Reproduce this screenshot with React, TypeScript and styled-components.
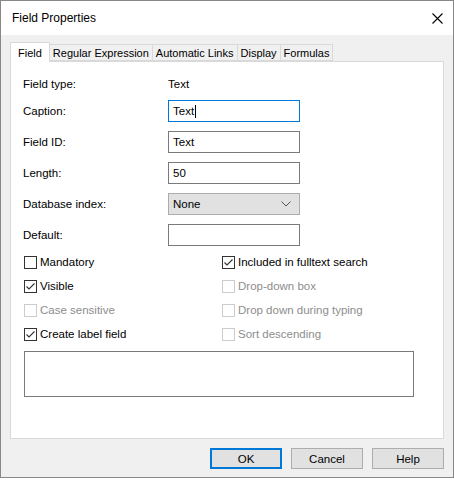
import React from 'react';
import styled, { createGlobalStyle } from 'styled-components';

const Global = createGlobalStyle`
  html, body { margin: 0; padding: 0; background: #ffffff; }
  body { font-family: "Segoe UI", "Liberation Sans", Arial, sans-serif; font-size: 11.5px; color: #000; }
  * { box-sizing: border-box; }
`;

const Window = styled.div`
  width: 454px;
  height: 478px;
  border: 1px solid #888888;
  background: #f0f0f0;
  display: flex;
  flex-direction: column;
`;

const TitleBar = styled.div`
  height: 34px;
  background: #ffffff;
  display: flex;
  align-items: center;
  justify-content: space-between;
  padding: 0 10px 0 11px;
  font-size: 12px;
`;

const Body = styled.div`
  flex: 1;
  display: flex;
  flex-direction: column;
  padding: 6px 9px 0 9px;
`;

const TabRow = styled.div`
  display: flex;
  align-items: flex-end;
  height: 20px;
  padding-left: 1px;
`;

const Tab = styled.div<{ $active?: boolean }>`
  height: ${({ $active }) => ($active ? '20px' : '17px')};
  padding: 0 ${({ $active }) => ($active ? '7px' : '3px')};
  margin-bottom: ${({ $active }) => ($active ? '-1px' : '0')};
  background: ${({ $active }) => ($active ? '#ffffff' : '#f0f0f0')};
  border: 1px solid #d9d9d9;
  border-bottom: ${({ $active }) => ($active ? 'none' : '1px solid #d9d9d9')};
  margin-left: -1px;
  display: flex;
  align-items: center;
  font-size: 11px;
  position: relative;
  z-index: ${({ $active }) => ($active ? 1 : 0)};
`;

const Panel = styled.div`
  height: 378px;
  background: #ffffff;
  border: 1px solid #d9d9d9;
  padding: 14px 12px 0 12px;
`;

const FormRow = styled.div`
  display: grid;
  grid-template-columns: 145px 132px;
  align-items: center;
  height: 22px;
  margin-bottom: 9px;
`;

const Label = styled.span``;

const TextBox = styled.div<{ $focus?: boolean }>`
  height: 22px;
  border: 1px solid ${({ $focus }) => ($focus ? '#0078d7' : '#7a7a7a')};
  background: #fff;
  display: flex;
  align-items: center;
  padding-left: 4px;
`;

const Caret = styled.span`
  display: inline-block;
  width: 1px;
  height: 13px;
  background: #000;
  margin-left: 1px;
`;

const Combo = styled.div`
  height: 22px;
  border: 1px solid #adadad;
  background: #e1e1e1;
  display: flex;
  align-items: center;
  justify-content: space-between;
  padding: 0 8px 0 4px;
`;

const CheckGrid = styled.div`
  display: grid;
  grid-template-columns: 198px 190px;
  row-gap: 8px;
  margin-top: 8px;
  padding-left: 1px;
`;

const CheckItem = styled.div<{ $disabled?: boolean }>`
  display: flex;
  align-items: center;
  gap: 3px;
  height: 16px;
  color: ${({ $disabled }) => ($disabled ? '#8d8d8d' : '#000')};
`;

const Box = styled.span<{ $disabled?: boolean }>`
  width: 13px;
  height: 13px;
  border: 1px solid ${({ $disabled }) => ($disabled ? '#cccccc' : '#333333')};
  background: #fff;
  display: flex;
  align-items: center;
  justify-content: center;
`;

const Memo = styled.div`
  width: 390px;
  height: 46px;
  border: 1px solid #7a7a7a;
  margin-top: 9px;
  margin-left: 1px;
`;

const ButtonRow = styled.div`
  display: flex;
  justify-content: flex-end;
  gap: 9px;
  padding-top: 9px;
`;

const Button = styled.div<{ $default?: boolean }>`
  width: 72px;
  height: 21px;
  background: #e1e1e1;
  border: ${({ $default }) => ($default ? '2px solid #0078d7' : '1px solid #adadad')};
  display: flex;
  align-items: center;
  justify-content: center;
`;

const Check = ({ on, disabled }: { on?: boolean; disabled?: boolean }) => (
  <Box $disabled={disabled}>
    {on && (
      <svg width="11" height="11" viewBox="0 0 11 11">
        <path d="M1.5 5.5 L4 8 L9.5 2.5" fill="none" stroke="#333" strokeWidth="1.1" />
      </svg>
    )}
  </Box>
);

const Item = ({ label, on, disabled }: { label: string; on?: boolean; disabled?: boolean }) => (
  <CheckItem $disabled={disabled}>
    <Check on={on} disabled={disabled} />
    <span>{label}</span>
  </CheckItem>
);

export default function App() {
  return (
    <>
      <Global />
      <Window>
        <TitleBar>
          <span>Field Properties</span>
          <svg width="11" height="11" viewBox="0 0 11 11">
            <path d="M0.5 0.5 L10.5 10.5 M10.5 0.5 L0.5 10.5" stroke="#000" strokeWidth="1.1" />
          </svg>
        </TitleBar>
        <Body>
          <TabRow>
            <Tab $active>Field</Tab>
            <Tab>Regular Expression</Tab>
            <Tab>Automatic Links</Tab>
            <Tab>Display</Tab>
            <Tab>Formulas</Tab>
          </TabRow>
          <Panel>
            <FormRow style={{ height: 16, marginBottom: 8 }}>
              <Label>Field type:</Label>
              <span>Text</span>
            </FormRow>
            <FormRow>
              <Label>Caption:</Label>
              <TextBox $focus>Text<Caret /></TextBox>
            </FormRow>
            <FormRow>
              <Label>Field ID:</Label>
              <TextBox>Text</TextBox>
            </FormRow>
            <FormRow>
              <Label>Length:</Label>
              <TextBox>50</TextBox>
            </FormRow>
            <FormRow>
              <Label>Database index:</Label>
              <Combo>
                <span>None</span>
                <svg width="10" height="6" viewBox="0 0 10 6">
                  <path d="M0.5 0.5 L5 5 L9.5 0.5" fill="none" stroke="#555" strokeWidth="1" />
                </svg>
              </Combo>
            </FormRow>
            <FormRow style={{ marginBottom: 0 }}>
              <Label>Default:</Label>
              <TextBox />
            </FormRow>
            <CheckGrid>
              <Item label="Mandatory" />
              <Item label="Included in fulltext search" on />
              <Item label="Visible" on />
              <Item label="Drop-down box" disabled />
              <Item label="Case sensitive" disabled />
              <Item label="Drop down during typing" disabled />
              <Item label="Create label field" on />
              <Item label="Sort descending" disabled />
            </CheckGrid>
            <Memo />
          </Panel>
          <ButtonRow>
            <Button $default>OK</Button>
            <Button>Cancel</Button>
            <Button>Help</Button>
          </ButtonRow>
        </Body>
      </Window>
    </>
  );
}
